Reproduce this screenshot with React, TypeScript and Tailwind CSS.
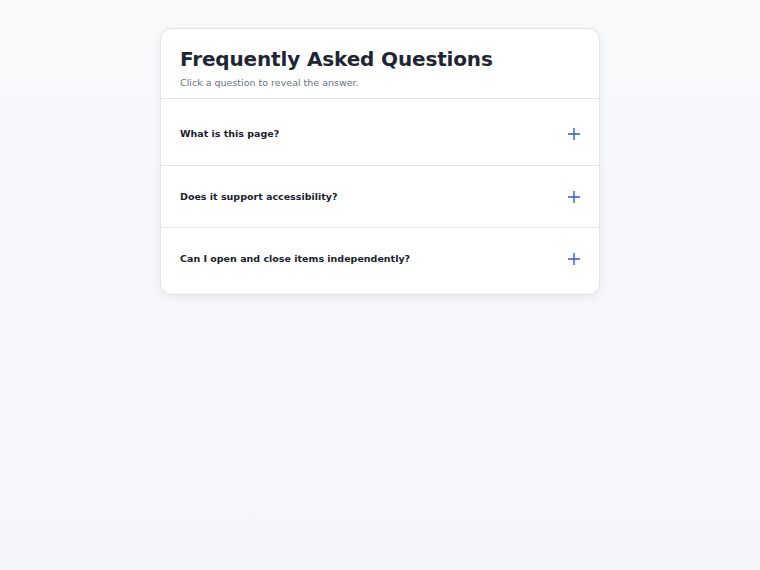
import React, { useState } from 'react';

const faqs = [
  {
    q: 'What is this page?',
    a: 'A small accordion demo that answers a few common questions.',
  },
  {
    q: 'Does it support accessibility?',
    a: 'Yes. Each question is a button with aria-expanded and a linked answer region.',
  },
  {
    q: 'Can I open and close items independently?',
    a: 'Yes. Every item keeps its own open state.',
  },
];

function PlusIcon() {
  return (
    <svg width="12" height="12" viewBox="0 0 12 12" fill="none" aria-hidden="true">
      <path d="M6 0v12M0 6h12" stroke="#2f5bd0" strokeWidth="1.4" />
    </svg>
  );
}

export default function App() {
  const [open, setOpen] = useState<boolean[]>(faqs.map(() => false));

  const toggle = (i: number) => {
    setOpen((prev) => prev.map((v, j) => (j === i ? !v : v)));
  };

  return (
    <div className="min-h-screen bg-gradient-to-b from-[#f8f9fb] to-[#f5f5fa] pt-[28px] font-['DejaVu_Sans',sans-serif]">
      <div className="mx-auto w-[440px] bg-white border border-[#e2e4e9] rounded-xl shadow-[0_2px_8px_rgba(15,23,42,0.07)] overflow-hidden">
        <div className="pl-[19px] pr-5 pt-[15px] pb-[7px] border-b border-[#e2e4e9]">
          <h1 className="text-[20px] leading-[30px] tracking-[-0.15px] font-bold text-[#1f2633]">Frequently Asked Questions</h1>
          <p className="mt-[1px] text-[9.5px] leading-[16px] text-[#6b7280]">Click a question to reveal the answer.</p>
        </div>

        <div className="pt-[4px] pb-[5px]">
          {faqs.map((item, i) => (
            <div key={item.q} className={i > 0 ? 'border-t border-[#e2e4e9]' : ''}>
              <button
                onClick={() => toggle(i)}
                aria-expanded={open[i]}
                className={`w-full flex items-center justify-between pl-[19px] pr-[19px] text-left cursor-pointer ${i === 0 ? 'pt-5 pb-[21px]' : 'py-5'}`}
              >
                <span className="text-[9.5px] leading-[21px] font-bold text-[#1a202c]">{item.q}</span>
                <PlusIcon />
              </button>
              {open[i] && (
                <p className="px-5 pb-4 text-[9.5px] text-[#4b5563]">{item.a}</p>
              )}
            </div>
          ))}
        </div>
      </div>
    </div>
  );
}
